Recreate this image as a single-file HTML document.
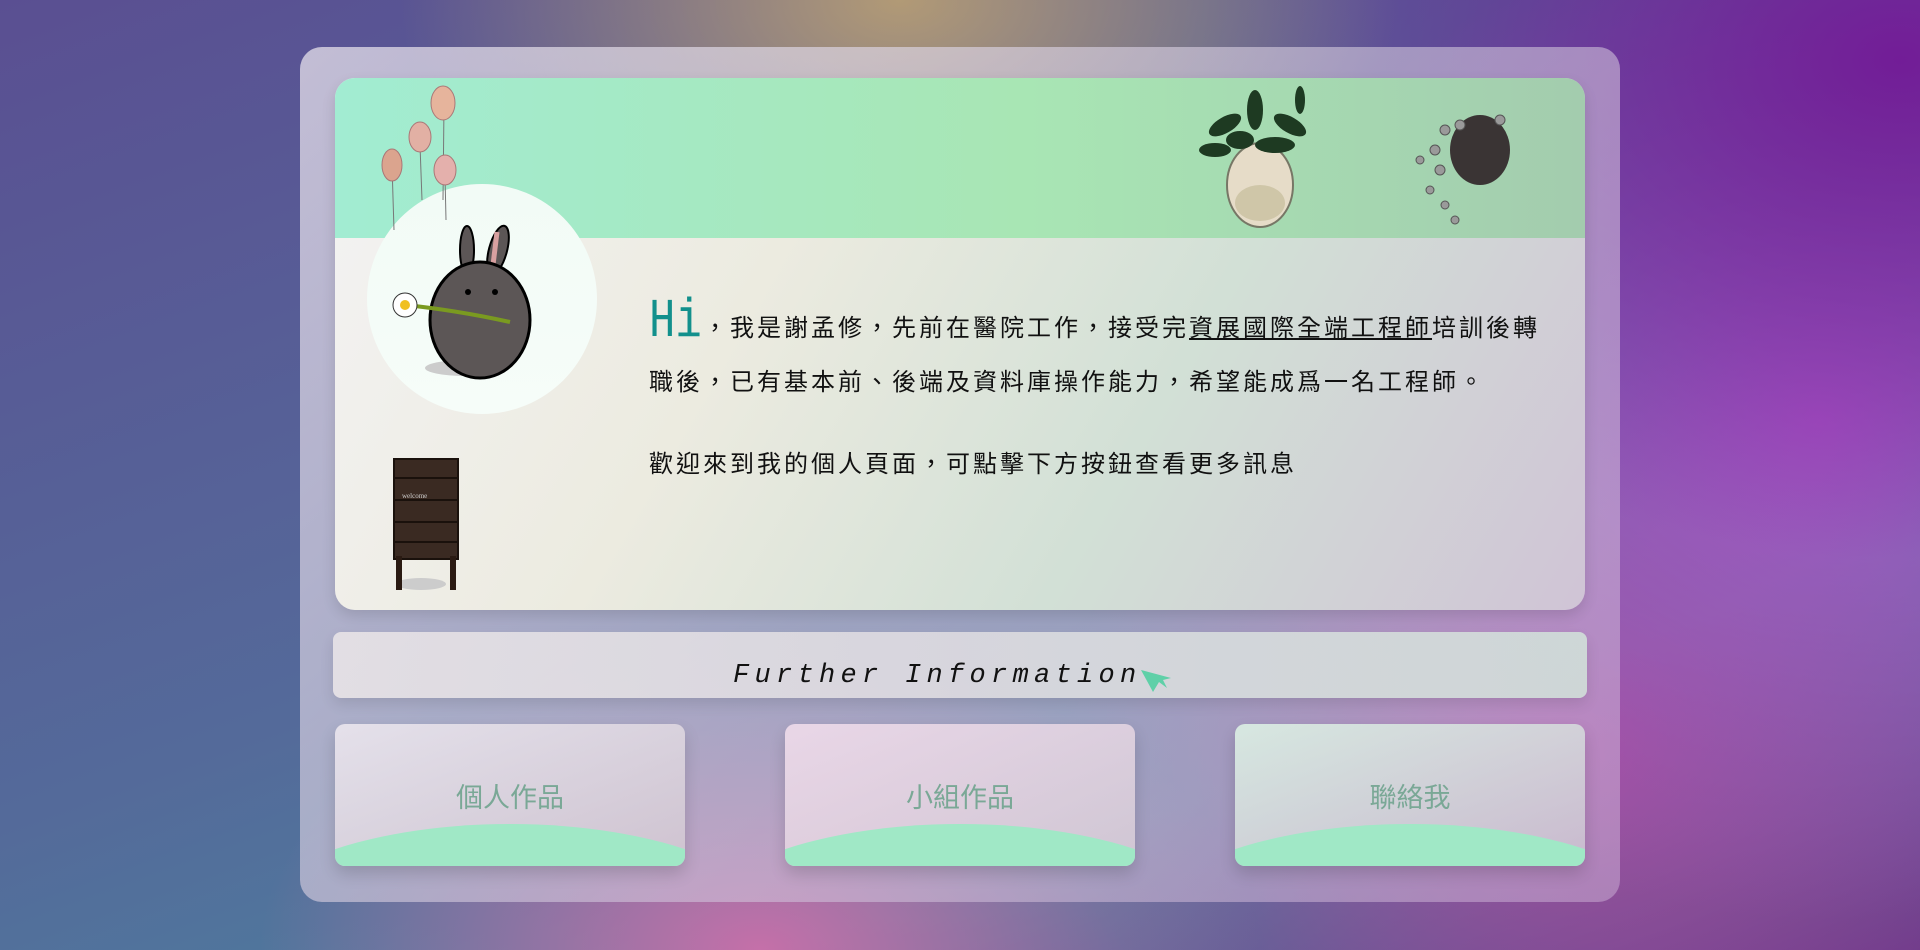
<!DOCTYPE html>
<html><head><meta charset="utf-8"><style>
*{margin:0;padding:0;box-sizing:border-box}
html,body{width:1920px;height:950px;overflow:hidden}
body{position:relative;
background:
radial-gradient(ellipse 500px 300px at 900px 0px,rgba(200,170,110,.8),transparent),
radial-gradient(ellipse 700px 500px at 1900px 60px,rgba(115,25,150,.95),transparent),
radial-gradient(ellipse 600px 500px at 1820px 420px,rgba(175,80,200,.9),transparent),
radial-gradient(ellipse 500px 300px at 760px 950px,rgba(210,110,170,.9),transparent),
radial-gradient(ellipse 500px 400px at 1560px 750px,rgba(190,70,160,.75),transparent),
linear-gradient(160deg,#5a4f92 0%,#546a9a 50%,#4d7f9e 75%,#6b3c8a 100%);
font-family:"Liberation Mono","Noto Sans CJK TC",monospace}
.panel{position:absolute;left:300px;top:47px;width:1320px;height:855px;border-radius:22px;
background:linear-gradient(135deg,rgba(230,225,235,.75),rgba(210,200,220,.6) 50%,rgba(200,170,210,.55));}
.card{position:absolute;left:335px;top:78px;width:1250px;height:532px;border-radius:20px;overflow:hidden;
background:linear-gradient(120deg,#f4f3f4 0%,#ecebe0 35%,#d2e0d6 65%,#d0c4d6 100%);box-shadow:0 6px 14px rgba(0,0,0,.12)}
.band{position:absolute;left:0;top:0;width:100%;height:160px;background:linear-gradient(90deg,#a2ecd2,#a8e6b4 55%,#a3ccae)}
.circle{position:absolute;left:367px;top:184px;width:230px;height:230px;border-radius:50%;background:linear-gradient(#f2fbf6,#f6fdf9)}
.txt{position:absolute;left:649px;color:#111;font-size:24px;letter-spacing:3px;white-space:nowrap}
.hi{font-size:55px;color:#12908c;letter-spacing:0;display:inline-block;transform:scaleX(.8);transform-origin:left;margin-right:-12px}
.bar{position:absolute;left:333px;top:632px;width:1254px;height:66px;border-radius:8px;
background:linear-gradient(90deg,rgba(235,230,232,.85),rgba(225,222,226,.85) 50%,rgba(210,228,218,.85));box-shadow:0 6px 14px rgba(0,0,0,.1)}
.bar span{position:absolute;left:400px;top:29px;font-style:italic;font-size:27px;letter-spacing:5.3px;color:#111}
.btn{position:absolute;top:724px;width:350px;height:142px;border-radius:10px;overflow:hidden;box-shadow:0 8px 16px rgba(0,0,0,.15);
background:linear-gradient(160deg,rgba(235,230,238,.9),rgba(210,200,210,.85))}
.btn b{position:absolute;width:100%;text-align:center;top:52px;font-weight:normal;font-size:27px;color:#7aa896;font-family:"Liberation Sans","Noto Sans CJK TC",sans-serif}
.btn i{position:absolute;left:-100px;top:100px;width:550px;height:220px;border-radius:50%;background:#a0e8c6}
</style></head><body>
<div class="panel"></div>
<div class="card"><div class="band"></div></div>
<div class="circle"></div>
<svg style="position:absolute;left:370px;top:80px" width="110" height="150">
<g stroke="#777" stroke-width="1"><line x1="22" y1="85" x2="24" y2="150"/><line x1="50" y1="65" x2="52" y2="120"/><line x1="74" y1="25" x2="73" y2="120"/><line x1="75" y1="95" x2="76" y2="140"/></g>
<ellipse cx="22" cy="85" rx="10" ry="16" fill="#dba48e" stroke="#a77"/>
<ellipse cx="50" cy="57" rx="11" ry="15" fill="#e2b0a4" stroke="#a77"/>
<ellipse cx="73" cy="23" rx="12" ry="17" fill="#e6b49c" stroke="#a77"/>
<ellipse cx="75" cy="90" rx="11" ry="15" fill="#e4b0ac" stroke="#a77"/>
</svg>
<svg style="position:absolute;left:385px;top:220px" width="170" height="170">
<ellipse cx="80" cy="148" rx="40" ry="8" fill="#ccc"/>
<ellipse cx="82" cy="30" rx="7" ry="24" fill="#5c5656" stroke="#000" stroke-width="2"/>
<ellipse cx="113" cy="30" rx="9" ry="25" fill="#5c5656" stroke="#000" stroke-width="2" transform="rotate(15 113 30)"/>
<path d="M112 12 L108 45" stroke="#d8a0a0" stroke-width="5"/>
<ellipse cx="95" cy="100" rx="50" ry="58" fill="#5c5656" stroke="#000" stroke-width="3"/>
<circle cx="83" cy="72" r="3"/><circle cx="110" cy="72" r="3"/>
<path d="M20 85 Q70 90 125 102" stroke="#7a9a20" stroke-width="4" fill="none"/>
<circle cx="20" cy="85" r="12" fill="#fff" stroke="#333"/><circle cx="20" cy="85" r="5" fill="#f0c020"/>
</svg>
<svg style="position:absolute;left:386px;top:456px" width="80" height="140">
<ellipse cx="35" cy="128" rx="25" ry="6" fill="#ccc"/>
<rect x="8" y="3" width="64" height="100" fill="#3a2a22" stroke="#1a110c" stroke-width="2"/>
<g stroke="#1a110c" stroke-width="2"><line x1="8" y1="22" x2="72" y2="22"/><line x1="8" y1="44" x2="72" y2="44"/><line x1="8" y1="66" x2="72" y2="66"/><line x1="8" y1="86" x2="72" y2="86"/></g>
<rect x="10" y="100" width="6" height="34" fill="#2a1a12"/><rect x="64" y="100" width="6" height="34" fill="#2a1a12"/>
<text x="16" y="42" font-size="7" fill="#ccc" font-family="Liberation Serif">welcome</text>
</svg>
<svg style="position:absolute;left:1195px;top:85px" width="125" height="145">
<ellipse cx="65" cy="100" rx="33" ry="42" fill="#e6dcc8" stroke="#776" stroke-width="2"/>
<ellipse cx="65" cy="118" rx="25" ry="18" fill="#cfc6a8"/>
<g fill="#1e3a22"><ellipse cx="30" cy="40" rx="18" ry="8" transform="rotate(-30 30 40)"/><ellipse cx="60" cy="25" rx="8" ry="20"/><ellipse cx="95" cy="40" rx="18" ry="8" transform="rotate(30 95 40)"/><ellipse cx="20" cy="65" rx="16" ry="7"/><ellipse cx="80" cy="60" rx="20" ry="8"/><ellipse cx="45" cy="55" rx="14" ry="9"/><ellipse cx="105" cy="15" rx="5" ry="14"/></g>
</svg>
<svg style="position:absolute;left:1400px;top:110px" width="120" height="120">
<ellipse cx="80" cy="40" rx="30" ry="35" fill="#3a3434"/>
<g fill="#9a9a9a" stroke="#555"><circle cx="45" cy="20" r="5"/><circle cx="35" cy="40" r="5"/><circle cx="40" cy="60" r="5"/><circle cx="30" cy="80" r="4"/><circle cx="45" cy="95" r="4"/><circle cx="55" cy="110" r="4"/><circle cx="100" cy="10" r="5"/><circle cx="20" cy="50" r="4"/><circle cx="60" cy="15" r="5"/></g>
</svg>
<div class="txt" style="top:290px"><span class="hi">Hi</span>，我是謝孟修，先前在醫院工作，接受完<u>資展國際全端工程師</u>培訓後轉</div>
<div class="txt" style="top:362px">職後，已有基本前、後端及資料庫操作能力，希望能成爲一名工程師。</div>
<div class="txt" style="top:444px">歡迎來到我的個人頁面，可點擊下方按鈕查看更多訊息</div>
<div class="bar"><span>Further Information</span>
<svg style="position:absolute;left:808px;top:38px" width="32" height="24"><path d="M0 0 L30 8 L22 10 L26 18 L18 12 L12 22 Z" fill="#5fd0a8"/></svg></div>
<div class="btn" style="left:335px"><i></i><b>個人作品</b></div>
<div class="btn" style="left:785px;background:linear-gradient(160deg,rgba(240,220,235,.9),rgba(215,205,215,.85))"><i></i><b>小組作品</b></div>
<div class="btn" style="left:1235px;background:linear-gradient(160deg,rgba(220,240,228,.9),rgba(205,195,210,.85))"><i></i><b>聯絡我</b></div>
</body></html>
